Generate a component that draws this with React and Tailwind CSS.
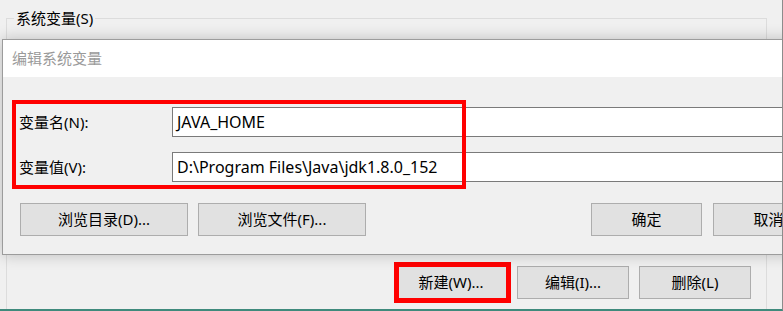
import React from 'react';

const font = "font-['Noto_Sans','Noto_Sans_CJK_SC',sans-serif]";

const WinButton = ({ children, className = '' }) => (
    <button
        type="button"
        className={`shrink-0 h-[33px] bg-[#e1e1e1] border border-[#adadad] text-[15px] text-black leading-none flex items-center justify-center ${className}`}
    >
        {children}
    </button>
);

const Field = ({ label, value }) => (
    <div className="flex items-center h-[30px]">
        <label className="shrink-0 w-[169px] pl-[16px] text-[15px] text-black">{label}</label>
        <div className="shrink-0 w-[700px] h-[30px] bg-white border border-[#7a7a7a] flex items-center pl-[4px] text-[16px] text-black">
            {value}
        </div>
    </div>
);

export default function App() {
    return (
        <div className={`relative w-[783px] h-[311px] bg-[#f0f0f0] overflow-hidden border-r border-r-[#8c8c8c] border-b-2 border-b-[#3f8a7c] ${font}`}>
            {/* Parent window: system variables group */}
            <div className="relative ml-[6px] mt-[18px] w-[761px] h-[300px] border-l border-t border-r border-[#dcdcdc]">
                <span className="absolute -top-[11px] left-[7px] px-[2px] bg-[#f0f0f0] text-[15px] leading-[20px] text-black">
                    系统变量(S)
                </span>
                <div className="flex justify-end gap-[10px] pt-[247px] pr-[15px]">
                    <WinButton className="w-[112px]">新建(W)...</WinButton>
                    <WinButton className="w-[112px]">编辑(I)...</WinButton>
                    <WinButton className="w-[112px]">删除(L)</WinButton>
                </div>
            </div>

            {/* Highlight around the "new" button */}
            <div className="absolute left-[394px] top-[262px] w-[117px] h-[41px] border-[5px] border-[#ff0000]" />

            {/* Edit dialog */}
            <div className="absolute left-[2px] top-[39px] w-[820px] border border-[#9c9c9c] bg-[#f0f0f0] shadow-[0_0_14px_rgba(0,0,0,0.22)]">
                <div className="h-[37px] bg-white flex items-center pl-[9px] text-[15px] text-[#9a9a9a]">
                    编辑系统变量
                </div>
                <div className="relative pt-[30px] pb-[18px]">
                    <div className="flex flex-col gap-[15px]">
                        <Field label="变量名(N):" value="JAVA_HOME" />
                        <Field label="变量值(V):" value="D:\Program Files\Java\jdk1.8.0_152" />
                    </div>
                    <div className="flex items-center mt-[21px] pl-[17px]">
                        <WinButton className="w-[168px]">浏览目录(D)...</WinButton>
                        <WinButton className="w-[168px] ml-[10px]">浏览文件(F)...</WinButton>
                        <WinButton className="w-[111px] ml-[225px]">确定</WinButton>
                        <WinButton className="w-[111px] ml-[11px]">取消</WinButton>
                    </div>
                    <div className="absolute left-[9px] top-[23px] w-[454px] h-[89px] border-[4px] border-[#ff0000]" />
                </div>
            </div>
        </div>
    );
}
